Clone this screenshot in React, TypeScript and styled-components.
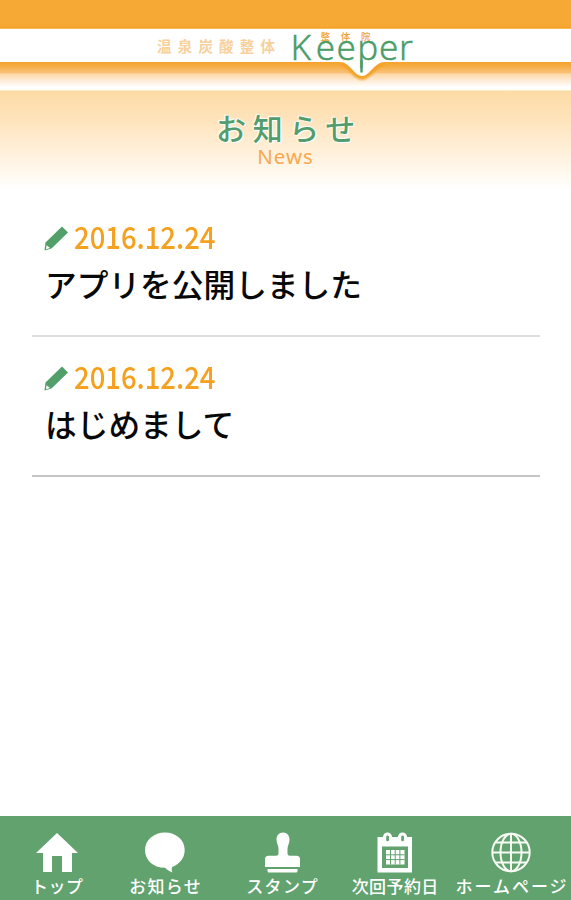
import React from "react";
import styled, { createGlobalStyle } from "styled-components";

const GlobalStyle = createGlobalStyle`
  * { box-sizing: border-box; }
  body {
    margin: 0;
    background: #fff;
    font-family: "Noto Sans CJK JP", "Noto Sans", sans-serif;
  }
`;

const Screen = styled.div`
  display: flex;
  flex-direction: column;
  width: 571px;
  height: 900px;
  overflow: hidden;
  background: #fff;
`;

const StatusBar = styled.div`
  flex: none;
  height: 29px;
  background: linear-gradient(#f6a935 0 26px, #f2a01f 28px, #fbd59c 29px);
`;

const BrandBar = styled.header`
  flex: none;
  height: 62px;
`;

const BrandArt = styled.svg`
  display: block;
`;

const TitleBand = styled.div`
  flex: none;
  height: 101px;
  padding-top: 20px;
  display: flex;
  flex-direction: column;
  align-items: center;
  background: linear-gradient(#fddba6 0%, #fee4bd 30%, #fff1dc 62%, #fff 97%);
`;

const Title = styled.h1`
  margin: 0;
  height: 35px;
  padding-left: 7px;
  font-size: 30px;
  line-height: 32px;
  font-weight: 500;
  letter-spacing: 6.6px;
  color: #539d6c;
  text-shadow: 0 0 2px #fff, 0 0 2px #fff, 1px 1px 1px #fff, -1px -1px 1px #fff;
`;

const Subtitle = styled.div`
  font-family: "Noto Sans", sans-serif;
  font-size: 20.5px;
  line-height: 20px;
  letter-spacing: 1px;
  color: #f7a950;
`;

const NewsList = styled.main`
  flex: 1;
  padding: 5px 31px 0 32px;
`;

const NewsItem = styled.article`
  height: 140px;
  padding: 22px 0 0 13px;
  border-bottom: 2px solid #c6c6c6;

  &:first-child {
    border-bottom-color: #dedede;
  }
`;

const DateRow = styled.div`
  display: flex;
  align-items: center;
  height: 34px;
`;

const Pencil = styled.svg`
  flex: none;
  width: 24px;
  height: 26px;
  margin: 5px 6px 0 -1px;
`;

const DateText = styled.time`
  font-size: 31px;
  line-height: 34px;
  font-weight: 500;
  color: #f5a01e;
  transform: scaleX(0.885);
  transform-origin: left;
`;

const Headline = styled.h2`
  margin: 10px 0 0;
  font-size: 31.7px;
  line-height: 40px;
  font-weight: 500;
  white-space: nowrap;
  color: #080808;
`;

const TabBar = styled.nav`
  flex: none;
  display: grid;
  grid-template-columns: 96px 120px 114px 112px 120px;
  height: 84px;
  padding: 16px 0 0 9px;
  background: #62a26e;
`;

const Tab = styled.div`
  display: flex;
  flex-direction: column;
  align-items: center;
`;

const TabIcon = styled.svg`
  flex: none;
  width: 42px;
  height: 42px;
`;

const TabLabel = styled.span<{ $spacing: number }>`
  margin-top: 2px;
  font-size: 17px;
  line-height: 20px;
  font-weight: 500;
  letter-spacing: ${(p) => p.$spacing}px;
  margin-right: ${(p) => -p.$spacing}px;
  white-space: nowrap;
  color: #fff;
`;

const news = [
  { date: "2016.12.24", title: "アプリを公開しました" },
  { date: "2016.12.24", title: "はじめまして" },
];

const HomeIcon = () => (
  <TabIcon viewBox="0 0 42 42" fill="#fff">
    <path d="M21 1 42 21H36V40H26V24H16V40H7V21H0Z" />
  </TabIcon>
);

const BubbleIcon = () => (
  <TabIcon viewBox="0 0 42 42" fill="#fff">
    <path d="M21 0.5C32 .5 40.7 8 40.7 18C40.7 26.5 35 32.5 28 35C27.500 37.500 27.800 39 28.500 40.500C25.500 39.500 23 38 21 35.800C9 35.800 1 28 1 18C1 8 10 .5 21 .5Z" />
  </TabIcon>
);

const StampIcon = () => (
  <TabIcon viewBox="0 0 42 42" fill="#fff">
    <path d="M22 .5c4 0 6.500 3 6.500 7 0 4-2 6-2 9.500v4.500c0 1.500 1 2.200 2.500 2.200H35.500q3.500 0 3.500 3.500V35h-35v-7.800q0-3.500 3.500-3.500h7.500c1.500 0 2.500-.7 2.500-2.200V17c0-3.500-2-5.500-2-9.500 0-4 2.500-7 6.500-7Z" />
    <path d="M6.500 37h30v2q0 1.500-1.500 1.500h-27Q6.500 40.500 6.500 39Z" />
  </TabIcon>
);

const CalendarIcon = () => (
  <TabIcon viewBox="0 0 42 42">
    <path fill="#fff" d="M3.500 5H38v35.500H3.500Z" />
    <path d="M8 14.500h26v21.500H8Z" fill="#62a26e" />
    <path d="M12 18h18.500v14.500H12Z" fill="#fff" />
    <path d="M16.500 18v14.500M21.200 18v14.500M25.900 18v14.500M12 22.800h18.500M12 27.600h18.500" stroke="#62a26e" strokeWidth="1" />
    <rect x="9" y=".5" width="9" height="10" rx="4.500" fill="#fff" />
    <rect x="24" y=".5" width="9" height="10" rx="4.500" fill="#fff" />
    <rect x="12.200" y="3.500" width="2.800" height="5.800" rx="1.400" fill="#62a26e" />
    <rect x="27.200" y="3.500" width="2.800" height="5.800" rx="1.400" fill="#62a26e" />
  </TabIcon>
);

const GlobeIcon = () => (
  <TabIcon viewBox="0 0 42 42" fill="none" stroke="#f6fbf4" strokeWidth="2">
    <circle cx="21" cy="20.500" r="18.700" />
    <ellipse cx="21" cy="20.500" rx="10.500" ry="18.700" />
    <path d="M21 1.500v38M2 20.500h38M5 10.500h32M5 30.500h32" />
  </TabIcon>
);

const tabs = [
  { label: "トップ", Icon: HomeIcon, spacing: 0.6 },
  { label: "お知らせ", Icon: BubbleIcon, spacing: 1.3 },
  { label: "スタンプ", Icon: StampIcon, spacing: 1.3 },
  { label: "次回予約日", Icon: CalendarIcon, spacing: 0.4 },
  { label: "ホームページ", Icon: GlobeIcon, spacing: 2 },
];

const BrandMark = () => (
  <BrandArt width="571" height="62" viewBox="0 29 571 62">
    <defs>
      <linearGradient id="ribbon" x1="0" y1="62" x2="0" y2="91" gradientUnits="userSpaceOnUse">
        <stop offset="0" stopColor="#f4a32b" />
        <stop offset=".14" stopColor="#f5ac42" />
        <stop offset=".38" stopColor="#f9c279" />
        <stop offset=".41" stopColor="#fcd7a6" />
        <stop offset=".6" stopColor="#fee8cf" />
        <stop offset=".87" stopColor="#fff" />
        <stop offset=".96" stopColor="#fff" />
        <stop offset="1" stopColor="#fddba6" />
      </linearGradient>
      <filter id="soft" x="-20%" y="-40%" width="140%" height="180%">
        <feGaussianBlur stdDeviation="1.300" />
      </filter>
    </defs>
    <rect y="29" width="571" height="34" fill="#fff" />
    <rect y="62" width="571" height="29" fill="url(#ribbon)" />
    <path d="M341 64C350 65 354 78 362 78S374 65 384 64Z" fill="#f4a22a" stroke="#f4a22a" strokeWidth="4" filter="url(#soft)" />
    <path d="M335 61H390V62H385C374 62 370 76 362 76S350 62 340 62H335Z" fill="#fff" />
    <text x="157" y="52" fontSize="14.500" fontWeight="700" fill="#f8d09c" textLength="118" lengthAdjust="spacing">温泉炭酸整体</text>
    <text x="290.500 315.800 336.500 357.300 379 399" y="60" fontFamily="Noto Sans" fontWeight="300" fontSize="35" fill="#4b9d68" stroke="#4b9d68" strokeWidth=".4">Keeper</text>
    <path d="M361.500 60V72.500" stroke="#4b9d68" strokeWidth="2.400" />
    <text x="320.500" y="40" fontSize="9.500" fontWeight="500" fill="#f4a23b" textLength="50">整体院</text>
  </BrandArt>
);

const PencilIcon = () => (
  <Pencil viewBox="0 0 24 26">
    <path d="M18 0.500 24 6.500 7.500 22.500.5 24.500 1.500 16.500Z" fill="#529f69" />
    <path d="M2.500 19.200 6 22 2 23.200Z" fill="#fff" />
  </Pencil>
);

export default function App() {
  return (
    <>
      <GlobalStyle />
      <Screen>
        <StatusBar />
        <BrandBar>
          <BrandMark />
        </BrandBar>
        <TitleBand>
          <Title>お知らせ</Title>
          <Subtitle>News</Subtitle>
        </TitleBand>
        <NewsList>
          {news.map((item) => (
            <NewsItem key={item.title}>
              <DateRow>
                <PencilIcon />
                <DateText>{item.date}</DateText>
              </DateRow>
              <Headline>{item.title}</Headline>
            </NewsItem>
          ))}
        </NewsList>
        <TabBar>
          {tabs.map(({ label, Icon, spacing }) => (
            <Tab key={label}>
              <Icon />
              <TabLabel $spacing={spacing}>{label}</TabLabel>
            </Tab>
          ))}
        </TabBar>
      </Screen>
    </>
  );
}
